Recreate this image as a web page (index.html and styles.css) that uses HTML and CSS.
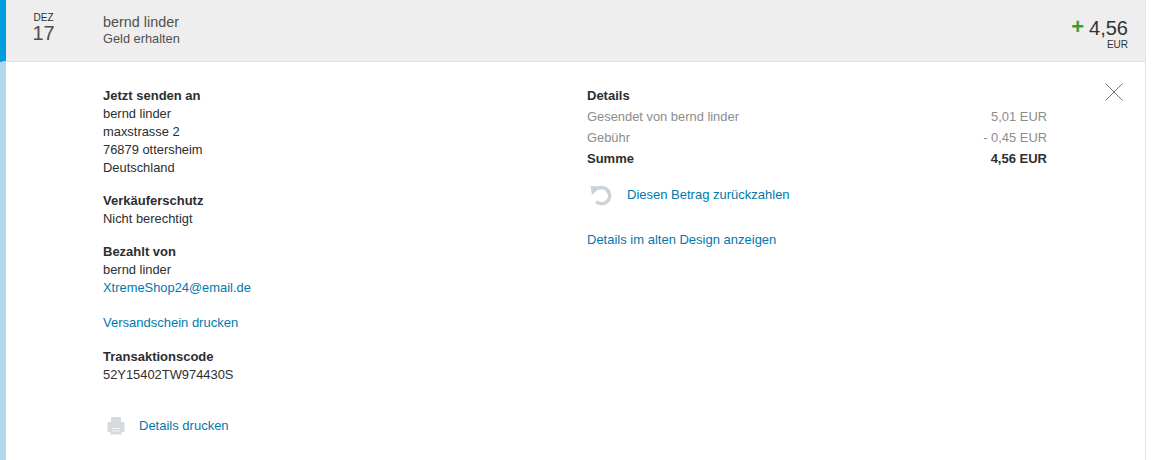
FILE: index.html
```html
<!DOCTYPE html>
<html lang="de">
<head>
<meta charset="utf-8">
<title>Transaktion</title>
<link rel="stylesheet" href="styles.css">
</head>
<body>
<div class="card">
  <header class="head">
    <div class="date"><span class="month">DEZ</span><span class="day">17</span></div>
    <div class="who"><div class="name">bernd linder</div><div class="status">Geld erhalten</div></div>
    <div class="total">
      <div class="amount"><span class="plus">+</span><span>4,56</span></div>
      <div class="cur">EUR</div>
    </div>
  </header>
  <main class="body">
    <section class="left">
      <div class="block">
        <h3>Jetzt senden an</h3>
        <p>bernd linder</p><p>maxstrasse 2</p><p>76879 ottersheim</p><p>Deutschland</p>
      </div>
      <div class="block">
        <h3>Verkäuferschutz</h3>
        <p>Nicht berechtigt</p>
      </div>
      <div class="block block-wide">
        <h3>Bezahlt von</h3>
        <p>bernd linder</p>
        <p><a href="#">XtremeShop24@email.de</a></p>
      </div>
      <div class="block block-link"><p><a href="#">Versandschein drucken</a></p></div>
      <div class="block">
        <h3>Transaktionscode</h3>
        <p>52Y15402TW974430S</p>
      </div>
      <div class="print">
        <svg class="print-icon" width="18" height="18" viewBox="0 0 18 18"><path fill="#d3dbdf" d="M4 0h10v5H4z"/><path fill="#d3dbdf" d="M1.500 5h15a1 1 0 0 1 1 1v8a1 1 0 0 1-1 1H14.500v2.500h-11V15H1.500a1 1 0 0 1-1-1V6a1 1 0 0 1 1-1z"/><path fill="#f0f3f5" d="M5 11h8v1H5zM5 13.500h8v1H5z"/></svg>
        <a href="#">Details drucken</a>
      </div>
    </section>
    <section class="right">
      <h3>Details</h3>
      <div class="row muted"><span>Gesendet von bernd linder</span><span>5,01 EUR</span></div>
      <div class="row muted"><span>Gebühr</span><span>- 0,45 EUR</span></div>
      <div class="row sum"><span>Summe</span><span>4,56 EUR</span></div>
      <div class="refund">
        <svg class="refund-icon" width="26" height="24" viewBox="0 0 26 24"><path fill="none" stroke="#ccd3d8" stroke-width="3.600" d="M11.500 5.300A8 8 0 1 1 9.300 18.700"/><path fill="#ccd3d8" d="M3.500 3l11 .5-9.500 8.500z"/></svg>
        <a href="#">Diesen Betrag zurückzahlen</a>
      </div>
      <p class="old"><a href="#">Details im alten Design anzeigen</a></p>
    </section>
    <button class="close" aria-label="Schließen"><svg width="18" height="18" viewBox="0 0 18 18"><path stroke="#777" stroke-width="1" fill="none" d="M0.500 0.500l17 17M17.500 0.500l-17 17"/></svg></button>
  </main>
</div>
</body>
</html>
```
FILE: styles.css
```css
* { box-sizing: border-box; }
html, body { margin: 0; padding: 0; height: 460px; overflow: hidden; background: #fff; }
body { font-family: "Liberation Sans", Arial, sans-serif; font-size: 12.9px; line-height: 18px; color: #2c2e2f; padding-right: 6px; }
.card { height: 460px; border-right: 1px solid #e4e4e4; }
.head { display: flex; height: 62px; background: #eeeeee; border-left: 6px solid #009cde; border-bottom: 1px solid #e2e2e2; }
.date { width: 97px; padding-top: 12px; padding-right: 22px; display: flex; flex-direction: column; align-items: center; }
.month { font-size: 10px; line-height: 11px; color: #2c2e2f; }
.day { font-size: 20px; line-height: 21px; color: #4d4f50; }
.who { flex: 1; padding-top: 13px; }
.name { font-size: 14.400px; line-height: 18px; color: #505050; }
.status { font-size: 12.800px; line-height: 15px; color: #505050; }
.total { padding: 15px 17px 0 0; text-align: right; }
.amount { font-size: 20px; line-height: 26px; color: #333; display: flex; align-items: center; gap: 5px; }
.plus { color: #3a9e35; font-size: 22px; font-weight: bold; position: relative; top: -1px; }
.cur { font-size: 10px; line-height: 8px; color: #333; }
.body { position: relative; height: 398px; border-left: 6px solid #b0d9ec; display: flex; padding: 25px 0 0 97px; }
.left { width: 484px; flex: none; }
.right { width: 460px; flex: none; }
h3 { margin: 0; font-size: 13px; font-weight: bold; line-height: 18px; color: #2c2e2f; }
p { margin: 0; }
a { color: #0079ad; text-decoration: none; }
.block { margin-bottom: 15px; }
.block-wide { margin-bottom: 17px; }
.block-link { margin-bottom: 16px; }
.block-link a, .print a, .refund a, .old a { font-size: 13px; }
.print { display: flex; align-items: center; gap: 14px; margin-top: 33px; padding-left: 4px; }
.print-icon { display: block; }
.right h3 { margin-bottom: 1px; }
.row { display: flex; justify-content: space-between; line-height: 21px; }
.muted { color: #8c8c8c; }
.sum { color: #2c2e2f; font-weight: bold; font-size: 13px; }
.refund { display: flex; align-items: center; gap: 14px; margin-top: 14px; }
.refund-icon { display: block; }
.old { margin-top: 24px; }
.close { position: absolute; top: 21px; right: 22px; padding: 0; border: 0; background: none; line-height: 0; }
```
